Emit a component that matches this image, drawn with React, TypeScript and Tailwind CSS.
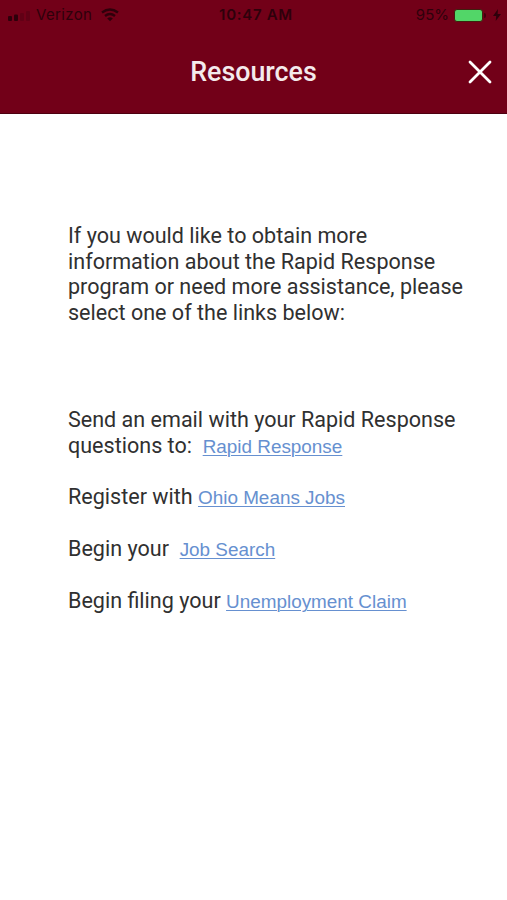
import React from "react";

const link = "font-['Liberation_Sans',Arial,sans-serif] text-[18.9px] leading-none text-[#6690d0] underline decoration-1 underline-offset-2";

export default function App() {
  return (
    <div className="flex h-[900px] w-[507px] flex-col overflow-hidden bg-white font-[Roboto,sans-serif] text-[#303030]">
      <header className="h-[114px] border-b border-[#4d0010] bg-[#720018]">
        <div className="flex h-[30px] items-center justify-between font-[Inter,sans-serif] text-[15px] text-[#2e000b]">
          <div className="flex w-[219px] items-center pl-2">
            <svg width="24" height="12" viewBox="0 0 24 12" fill="currentColor" className="mt-[3px]">
              <rect x="0" y="5" width="4" height="5" rx="1" />
              <rect x="6" y="3.5" width="4" height="6.5" rx="1" />
              <rect x="12" y="2" width="4" height="8" rx="1" opacity=".25" />
              <rect x="18" y="0" width="4" height="10" rx="1" opacity=".25" />
            </svg>
            <span className="ml-[4px] w-[56px] tracking-[0.35px]">Verizon</span>
            <svg width="18" height="14" viewBox="0 0 18 14" fill="none" stroke="currentColor" strokeWidth="2.4" className="ml-[9px]">
              <path d="M1 4.5Q9-1.5 17 4.5M4 8Q9 4 14 8" />
              <path d="M6.2 10.5Q9 8 11.8 10.5L9 13.2Z" fill="currentColor" stroke="none" />
            </svg>
          </div>
          <span className="w-[74px] text-center font-semibold tracking-[0.7px] whitespace-nowrap">10:47 AM</span>
          <div className="flex flex-1 items-center justify-end pr-[6px]">
            <span className="mr-[5px]">95%</span>
            <span className="h-[13px] w-[29px] rounded-[3px] border border-[#40200f] bg-[#52d668]" />
            <span className="ml-px h-[5px] w-[2px] rounded-r bg-[#40000e]" />
            <svg width="8" height="12" viewBox="0 0 8 12" fill="currentColor" className="ml-[7px]">
              <path d="M5 0L0 7H3.2L2.7 12L8 5H4.6Z" />
            </svg>
          </div>
        </div>
        <div className="grid h-[84px] grid-cols-[1fr_auto_1fr] items-center">
          <span />
          <h1 className="text-[26.8px] font-medium text-[#f4eaec]">Resources</h1>
          <svg className="mr-[14px] justify-self-end" width="26" height="26" viewBox="0 0 26 26" stroke="#fff" strokeWidth="2.8" strokeLinecap="round">
            <path d="M3 3L23 23M23 3L3 23" />
          </svg>
        </div>
      </header>
      <main className="px-[68px] pt-[109px] text-[21.55px] leading-[25.7px] whitespace-nowrap">
        <p>If you would like to obtain more<br />information about the Rapid Response<br />program or need more assistance, please<br />select one of the links below:</p>
        <div className="mt-[81px] flex flex-col gap-[26.2px]">
          <p>Send an email with your Rapid Response<br />questions to:&nbsp; <a className={link}>Rapid Response</a></p>
          <p>Register with <a className={link}>Ohio Means Jobs</a></p>
          <p>Begin your&nbsp; <a className={link}>Job Search</a></p>
          <p>Begin filing your <a className={link}>Unemployment Claim</a></p>
        </div>
      </main>
    </div>
  );
}
